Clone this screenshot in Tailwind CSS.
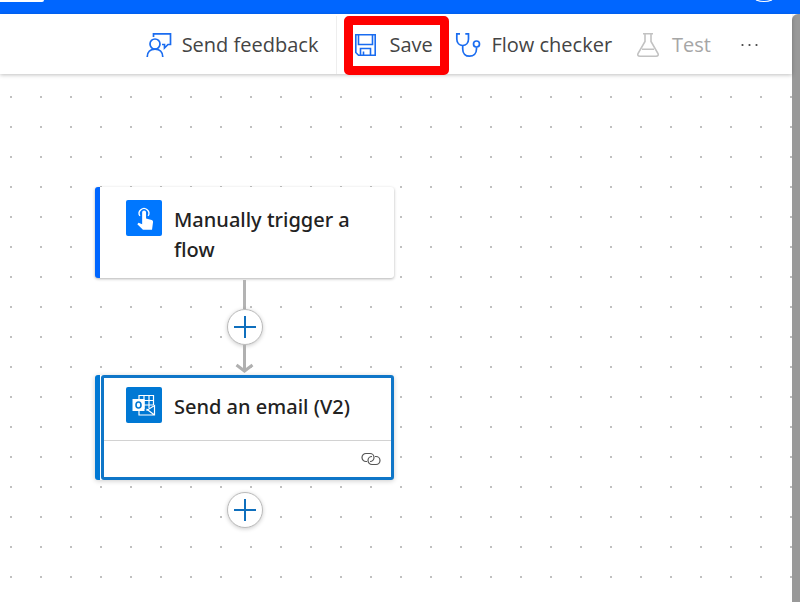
<!DOCTYPE html>
<html lang="en">

<head>
    <meta charset="UTF-8">
    <meta name="viewport" content="width=device-width, initial-scale=1.0">
    <title>Flow designer</title>
    <script src="https://cdn.jsdelivr.net/npm/@tailwindcss/browser@4"></script>
</head>

<body class="bg-white font-['Open_Sans',sans-serif] text-xl flex flex-col h-screen overflow-hidden">
    <!-- Top bar -->
    <header class="bg-[#0066ff] h-3.5 shrink-0 flex items-start justify-between pr-6">
        <div class="bg-white w-11 h-0.5 rounded-br-sm"></div>
        <svg class="w-6 h-1" viewBox="0 0 24 4" fill="none" stroke="white" stroke-width="1.2">
            <path d="M4 0Q12 3 20 0" />
        </svg>
    </header>

    <div class="flex flex-1 min-h-0">
        <div class="flex flex-col flex-1 min-w-0">
            <!-- Toolbar -->
            <nav class="relative bg-white h-[60px] shrink-0 flex items-center justify-end pt-0.5 pr-[34px] text-[#444] shadow-[0_1px_4px_rgba(0,0,0,0.25)]">
                <button class="flex items-center gap-2.5 pr-[18px]">
                    <svg class="w-[26px] h-[26px]" viewBox="0 0 26 26" fill="none" stroke="#1a6cf0" stroke-width="1.7">
                        <circle cx="9" cy="12" r="5" />
                        <path d="M1.2 25C1.2 20 4.5 17.2 9 17.2S16.800 20 16.800 25" />
                        <path d="M7.500 5V1.800H24.500V12.500H22L18.500 16V12.500H16" />
                    </svg>
                    Send feedback
                </button>
                <div class="w-px h-full bg-[#eee]"></div>
                <button class="flex items-center gap-3 ml-[7px] w-[105px] h-[59px] border-9 border-[#ff0000] rounded-[5px] whitespace-nowrap">
                    <svg class="w-6 h-6 shrink-0" viewBox="0 0 24 24" fill="none" stroke="#1a6cf0" stroke-width="1.600">
                        <path d="M2.800 1.800H22.200V22.200H5.500L2.800 19.500Z" />
                        <path d="M5.500 2V11.500H19.500V2" />
                        <path d="M7.500 22V15.500H17.500V22M10.500 22V18.500" />
                    </svg>
                    Save
                </button>
                <button class="flex items-center gap-2.5 ml-1.5 pr-6">
                    <svg class="w-[26px] h-[26px]" viewBox="0 0 26 26" fill="none" stroke="#1a6cf0" stroke-width="1.700">
                        <path d="M5 1.800H1.800V7C1.800 11 4.500 13.500 7.700 13.500S13.500 11 13.500 7V1.800H10.300" />
                        <path d="M7.700 13.500V17C7.700 21.500 10.500 24.200 14.500 24.200S21.500 21.500 21.500 17V15.200" />
                        <circle cx="21.500" cy="12" r="3" />
                    </svg>
                    Flow checker
                </button>
                <button class="flex items-center gap-3 pr-[30px] text-[#a6a6a6]" disabled>
                    <svg class="w-6 h-[26px]" viewBox="0 0 24 26" fill="none" stroke="#c2c2c2" stroke-width="1.600">
                        <path d="M7 1.800H17M9 2V9.500L2 21.500Q1 24.200 4 24.200H20Q23 24.200 22 21.500L15 9.500V2M6 17.200H18" />
                    </svg>
                    Test
                </button>
                <button aria-label="More">
                    <svg class="w-[17px] h-1" viewBox="0 0 17 4" fill="#444">
                        <circle cx="1.500" cy="2" r="1.100" />
                        <circle cx="8.500" cy="2" r="1.100" />
                        <circle cx="15.500" cy="2" r="1.100" />
                    </svg>
                </button>
            </nav>

            <!-- Designer canvas, 30px dot grid -->
            <main class="flex-1 pt-[113px] pl-[95px] bg-[radial-gradient(circle,#c0c0c0_1px,transparent_1px)] bg-size-[30px_30px] bg-position-[-4px_8px]">
                <div class="flex flex-col items-center w-[299px]">
                    <!-- Trigger -->
                    <section class="w-full flex items-start gap-3 pl-[26px] pr-6 pt-[13px] pb-[13px] bg-white border-l-5 border-[#0066ff] rounded-[3px] shadow-[0_1px_3px_rgba(0,0,0,0.3)]">
                        <div class="w-9 h-9 shrink-0 rounded-[2px] bg-[#0077ff]">
                            <svg class="w-9 h-9" viewBox="0 0 35 35" fill="white">
                                <path d="M13.500 15.500A4.700 4.700 0 1 1 21.500 15.500" fill="none" stroke="white" stroke-width="1.300" />
                                <path d="M15.700 12A1.900 1.900 0 0 1 19.500 12V18L25 19.500Q26.500 20 26.300 21.500L25.300 29H16.500L11 23.500L12.200 22.200L15.700 23.500Z" />
                            </svg>
                        </div>
                        <h2 class="font-['Noto_Sans',sans-serif] font-medium text-[#222] leading-[30px] pt-[5px]">Manually trigger a flow</h2>
                    </section>

                    <!-- Connector -->
                    <div class="w-[3px] h-[29px] mt-0.5 bg-[#b3b3b3]"></div>
                    <button aria-label="Insert a new step" class="w-9 h-9 rounded-full bg-white border border-[#bbb] shadow-[0_1px_4px_rgba(0,0,0,0.2)] flex items-center justify-center">
                        <svg class="w-[22px] h-[22px]" viewBox="0 0 22 22" stroke="#0f6fbd" stroke-width="2">
                            <path d="M11 0V22M0 11H22" />
                        </svg>
                    </button>
                    <svg class="w-[19px] h-7 mb-[2px]" viewBox="0 0 19 28" fill="none" stroke="#b0b0b0" stroke-width="3">
                        <path d="M9.500 0V26M1.500 20L9.500 26L17.500 20" />
                    </svg>

                    <!-- Action -->
                    <section class="w-full flex bg-white rounded-[3px] border-l-5 border-[#0078d4] shadow-[0_1px_5px_rgba(0,0,0,0.2)]">
                        <div class="flex-1 ml-px border-3 border-[#0f76c8] rounded-[3px]">
                            <div class="flex items-start gap-3 pl-[22px] pt-[9px] h-[62px]">
                                <div class="w-9 h-9 shrink-0 rounded-[2px] bg-[#0078d4]">
                                    <svg class="w-9 h-9" viewBox="0 0 35 36" fill="none" stroke="white" stroke-width="1.200">
                                        <path d="M12.500 12V8.500H27V18M17.500 8.500V22M22.500 8.500V21M17.500 13.500H27M17.500 18H27" />
                                        <path d="M12.500 24V28H28V18.500L20 23.500M20 22L28 28" />
                                        <rect x="6" y="12" width="12" height="12" fill="white" stroke="none" />
                                        <ellipse cx="12" cy="18" rx="2.500" ry="3" stroke="#0078d4" stroke-width="1.600" />
                                    </svg>
                                </div>
                                <h2 class="font-['Noto_Sans',sans-serif] font-medium text-[#222] leading-[30px] pt-[5px]">Send an email (V2)</h2>
                            </div>
                            <div class="flex items-center justify-end h-[37px] pr-2.5 border-t border-[#d2d2d2]">
                                <svg class="w-5 h-[14px]" viewBox="0 0 20 14" fill="none" stroke="#555" stroke-width="1.200">
                                    <path d="M6 9.500H5A4 4 0 0 1 5 1.500H9A4 4 0 0 1 9 9.500" />
                                    <path d="M14 4.500H15A4 4 0 0 1 15 12.500H11A4 4 0 0 1 11 4.500" />
                                </svg>
                            </div>
                        </div>
                    </section>

                    <button aria-label="Add a new step" class="mt-3 w-9 h-9 rounded-full bg-white border border-[#bbb] shadow-[0_1px_4px_rgba(0,0,0,0.2)] flex items-center justify-center">
                        <svg class="w-[22px] h-[22px]" viewBox="0 0 22 22" stroke="#0f6fbd" stroke-width="2">
                            <path d="M11 0V22M0 11H22" />
                        </svg>
                    </button>
                </div>
            </main>
        </div>

        <!-- Scrollbar -->
        <div class="w-2 bg-[#999] rounded-tl-md"></div>
    </div>
</body>

</html>
